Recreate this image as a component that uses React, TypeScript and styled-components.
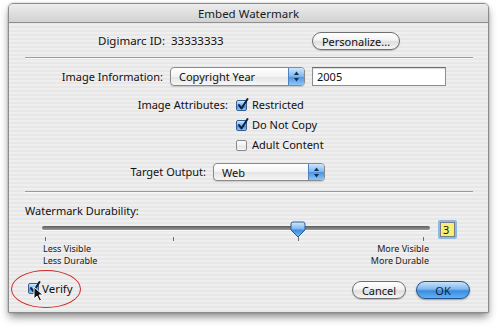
import React from 'react';
import styled, { createGlobalStyle, css } from 'styled-components';

const GlobalStyle = createGlobalStyle`
  html, body {
    margin: 0;
    padding: 0;
    background: #ffffff;
  }
  body {
    font-family: "Noto Sans", "DejaVu Sans", sans-serif;
    color: #111;
  }
`;

const Page = styled.div`
  width: 500px;
  height: 328px;
  padding: 3px 0 0 8px;
  box-sizing: border-box;
`;

const Window = styled.div`
  position: relative;
  width: 481px;
  height: 310px;
  box-sizing: border-box;
  border: 1px solid #8c8c8c;
  border-radius: 5px 5px 0 0;
  box-shadow: 0 5px 8px -1px rgba(0, 0, 0, 0.45), 0 0 2px rgba(0, 0, 0, 0.25);
  background: repeating-linear-gradient(
    to bottom,
    #efefef 0px,
    #efefef 2px,
    #e7e7e7 2px,
    #e7e7e7 4px
  );
  display: flex;
  flex-direction: column;
`;

const TitleBar = styled.div`
  height: 18px;
  border-bottom: 1px solid #8f8f8f;
  border-radius: 4px 4px 0 0;
  background: linear-gradient(to bottom, #ececec, #d2d2d2);
  display: flex;
  align-items: center;
  justify-content: center;
  font-size: 11.5px;
  color: #1a1a1a;
`;

const Label = styled.span<{ $size?: number }>`
  font-size: ${(p) => p.$size ?? 11}px;
  line-height: 1.2;
  white-space: nowrap;
`;

const TopRow = styled.div`
  display: grid;
  grid-template-columns: 89px 214px 88px;
  align-items: center;
  height: 17px;
  margin-top: 9px;
`;

const Separator = styled.div<{ $top: number }>`
  height: 1px;
  margin: ${(p) => p.$top}px 15px 0 16px;
  background: #9a9a9a;
  border-bottom: 1px solid #fafafa;
`;

const pill = css`
  box-sizing: border-box;
  height: 18px;
  border-radius: 9px;
  display: flex;
  align-items: center;
  justify-content: center;
  font-size: 11px;
  font-family: inherit;
`;

const Button = styled.div<{ $default?: boolean; $width: number }>`
  ${pill}
  width: ${(p) => p.$width}px;
  ${(p) =>
    p.$default
      ? css`
          border: 1px solid #24518f;
          background: linear-gradient(
            to bottom,
            #c7e2fb 0%,
            #7db8ee 45%,
            #3d8be0 55%,
            #5fb2f4 100%
          );
          color: #0c1f3d;
          box-shadow: 0 1px 2px rgba(0, 0, 0, 0.35);
        `
      : css`
          border: 1px solid #6f6f6f;
          background: linear-gradient(
            to bottom,
            #ffffff 0%,
            #f2f2f2 45%,
            #dedede 55%,
            #f5f5f5 100%
          );
          color: #111;
          box-shadow: 0 1px 1px rgba(0, 0, 0, 0.2);
        `}
`;

const FormRow = styled.div<{ $labelWidth: number; $height: number; $top?: number }>`
  display: grid;
  grid-template-columns: ${(p) => p.$labelWidth}px auto auto;
  justify-content: start;
  align-items: center;
  column-gap: 7px;
  height: ${(p) => p.$height}px;
  margin-top: ${(p) => p.$top ?? 0}px;
  & > ${Label}:first-child {
    text-align: right;
  }
`;

const Popup = styled.div<{ $width: number; $height?: number }>`
  box-sizing: border-box;
  width: ${(p) => p.$width}px;
  height: ${(p) => p.$height ?? 19}px;
  border: 1px solid #8a8a8a;
  border-radius: 4px;
  background: linear-gradient(to bottom, #ffffff, #f3f3f3 50%, #e4e4e4 51%, #f6f6f6);
  display: flex;
  align-items: center;
  overflow: hidden;
  box-shadow: 0 1px 1px rgba(0, 0, 0, 0.15);
`;

const PopupText = styled.span`
  flex: 1;
  padding-left: 8px;
  font-size: 11px;
`;

const PopupCap = styled.div`
  width: 15px;
  height: 100%;
  border-left: 1px solid #4f7fbf;
  background: linear-gradient(to bottom, #cfe6fb, #7ab6ee 50%, #4a93e3 51%, #8cc6f6);
  display: flex;
  align-items: center;
  justify-content: center;
`;

const TextField = styled.div`
  box-sizing: border-box;
  width: 134px;
  height: 19px;
  border: 1px solid #8d8d8d;
  border-top-color: #6b6b6b;
  background: #ffffff;
  box-shadow: inset 0 1px 1px rgba(0, 0, 0, 0.15);
  display: flex;
  align-items: center;
  padding-left: 4px;
  font-size: 11px;
`;

const CheckRow = styled.div<{ $indent?: number }>`
  display: flex;
  align-items: center;
  gap: 5px;
  margin-left: ${(p) => p.$indent ?? 0}px;
`;

const Box = styled.div<{ $checked?: boolean }>`
  position: relative;
  box-sizing: border-box;
  width: 11px;
  height: 11px;
  border-radius: 2px;
  border: 1px solid ${(p) => (p.$checked ? '#355f95' : '#8a8a8a')};
  background: ${(p) =>
    p.$checked
      ? 'linear-gradient(to bottom, #d6ebfd, #6aaaea 50%, #3f88dc 51%, #8ec6f6)'
      : 'linear-gradient(to bottom, #ffffff, #f0f0f0 50%, #e2e2e2 51%, #f8f8f8)'};
  & > svg {
    position: absolute;
    left: 0px;
    top: -4px;
  }
`;

const Stack = styled.div`
  display: flex;
  flex-direction: column;
  margin-top: 9px;
`;

const AttrRow = styled.div`
  height: 20px;
  display: flex;
  align-items: center;
  padding-left: 219px;
`;

const AttrLabelSlot = styled.div`
  width: 0;
  display: flex;
  justify-content: flex-end;
  margin-right: 8px;
`;

const SectionLabel = styled(Label)`
  display: block;
  margin: 11px 0 0 16px;
  height: 14px;
`;

const SliderRow = styled.div`
  display: flex;
  align-items: flex-start;
  margin-top: 1px;
  padding-left: 33px;
  gap: 8px;
  height: 24px;
`;

const SliderArea = styled.div`
  position: relative;
  width: 388px;
  height: 24px;
`;

const Track = styled.div`
  position: absolute;
  left: 0;
  right: 0;
  top: 7px;
  height: 4px;
  border-radius: 2px;
  background: linear-gradient(to bottom, #5c5c5c, #9a9a9a);
  box-shadow: 0 1px 0 #fafafa;
`;

const Tick = styled.div<{ $x: number }>`
  position: absolute;
  left: ${(p) => p.$x}px;
  top: 18px;
  width: 1px;
  height: 4px;
  background: #6c6c6c;
`;

const Thumb = styled.svg`
  position: absolute;
  left: 248px;
  top: 2px;
`;

const ValueBox = styled.div`
  box-sizing: border-box;
  width: 19px;
  height: 19px;
  margin-top: 1px;
  border: 2px solid #8cb8ea;
  border-radius: 2px;
  background: #f6ef73;
  box-shadow: inset 0 0 0 1px #7d7d7d;
  display: flex;
  align-items: center;
  padding-left: 3px;
  font-size: 11px;
`;

const RangeLabels = styled.div`
  display: flex;
  justify-content: space-between;
  width: 386px;
  margin: 0 0 0 34px;
  height: 22px;
`;

const SmallText = styled.div<{ $right?: boolean }>`
  font-size: 9px;
  line-height: 11.5px;
  text-align: ${(p) => (p.$right ? 'right' : 'left')};
  color: #1a1a1a;
`;

const BottomRow = styled.div`
  position: relative;
  display: flex;
  align-items: center;
  margin-top: 16px;
  padding: 0 18px 0 19px;
  height: 18px;
`;

const VerifyCheck = styled(CheckRow)`
  position: relative;
  gap: 3px;
  margin-top: -2px;
`;

const Buttons = styled.div`
  margin-left: auto;
  display: flex;
  gap: 10px;
`;

const Ellipse = styled.div`
  position: absolute;
  left: 2px;
  top: -11px;
  width: 68px;
  height: 36px;
  border: 1.5px solid #cf2a2a;
  border-radius: 50%;
  pointer-events: none;
`;

const Cursor = styled.svg`
  position: absolute;
  left: 5px;
  top: 4px;
`;

const Check = () => (
  <svg width="12" height="14" viewBox="0 0 12 14">
    <path
      d="M2 8 L4.5 11.5 L10.5 2"
      fill="none"
      stroke="#10203a"
      strokeWidth="2"
      strokeLinecap="round"
      strokeLinejoin="round"
    />
  </svg>
);

const Checkbox = ({ checked }: { checked?: boolean }) => (
  <Box $checked={checked}>{checked && <Check />}</Box>
);

const Arrows = () => (
  <svg width="7" height="11" viewBox="0 0 7 11">
    <path d="M3.5 0.5 L6 4 L1 4 Z" fill="#14305a" />
    <path d="M3.5 10.5 L6 7 L1 7 Z" fill="#14305a" />
  </svg>
);

export default function App() {
  return (
    <Page>
      <GlobalStyle />
      <Window>
        <TitleBar>Embed Watermark</TitleBar>

        <TopRow>
          <span />
          <Label $size={11.5}>Digimarc ID:&nbsp; 33333333</Label>
          <Button $width={88}>Personalize...</Button>
        </TopRow>

        <Separator $top={8} />

        <FormRow $labelWidth={154} $height={19} $top={8}>
          <Label>Image Information:</Label>
          <Popup $width={135}>
            <PopupText>Copyright Year</PopupText>
            <PopupCap>
              <Arrows />
            </PopupCap>
          </Popup>
          <TextField>2005</TextField>
        </FormRow>

        <Stack>
          <AttrRow>
            <AttrLabelSlot>
              <Label>Image Attributes:</Label>
            </AttrLabelSlot>
            <CheckRow>
              <Checkbox checked />
              <Label>Restricted</Label>
            </CheckRow>
          </AttrRow>
          <AttrRow>
            <CheckRow $indent={8}>
              <Checkbox checked />
              <Label>Do Not Copy</Label>
            </CheckRow>
          </AttrRow>
          <AttrRow>
            <CheckRow $indent={8}>
              <Checkbox />
              <Label>Adult Content</Label>
            </CheckRow>
          </AttrRow>
        </Stack>

        <FormRow $labelWidth={197} $height={18} $top={8}>
          <Label>Target Output:</Label>
          <Popup $width={112} $height={18}>
            <PopupText>Web</PopupText>
            <PopupCap>
              <Arrows />
            </PopupCap>
          </Popup>
        </FormRow>

        <Separator $top={10} />

        <SectionLabel>Watermark Durability:</SectionLabel>

        <SliderRow>
          <SliderArea>
            <Track />
            {[3, 131, 256, 381].map((x) => (
              <Tick key={x} $x={x} />
            ))}
            <Thumb width="16" height="18" viewBox="0 0 16 18">
              <defs>
                <linearGradient id="thumbFill" x1="0" y1="0" x2="0" y2="1">
                  <stop offset="0" stopColor="#d3eafd" />
                  <stop offset="0.45" stopColor="#7cb9ef" />
                  <stop offset="0.55" stopColor="#3f8be0" />
                  <stop offset="1" stopColor="#78bdf5" />
                </linearGradient>
              </defs>
              <path
                d="M3 1 H13 Q15 1 15 3 V9 L8 16 L1 9 V3 Q1 1 3 1 Z"
                fill="url(#thumbFill)"
                stroke="#2f5b93"
                strokeWidth="1"
              />
            </Thumb>
          </SliderArea>
          <ValueBox>3</ValueBox>
        </SliderRow>

        <RangeLabels>
          <SmallText>
            Less Visible
            <br />
            Less Durable
          </SmallText>
          <SmallText $right>
            More Visible
            <br />
            More Durable
          </SmallText>
        </RangeLabels>

        <BottomRow>
          <VerifyCheck>
            <Checkbox checked />
            <Label $size={11.5}>Verify</Label>
            <Cursor width="11" height="16" viewBox="0 0 11 16">
              <path
                d="M1 1 L1 13 L4 10 L6.5 15 L8.5 14 L6 9 L10 9 Z"
                fill="#111"
                stroke="#fff"
                strokeWidth="1"
              />
            </Cursor>
          </VerifyCheck>
          <Ellipse />
          <Buttons>
            <Button $width={54}>Cancel</Button>
            <Button $width={54} $default>
              OK
            </Button>
          </Buttons>
        </BottomRow>
      </Window>
    </Page>
  );
}
